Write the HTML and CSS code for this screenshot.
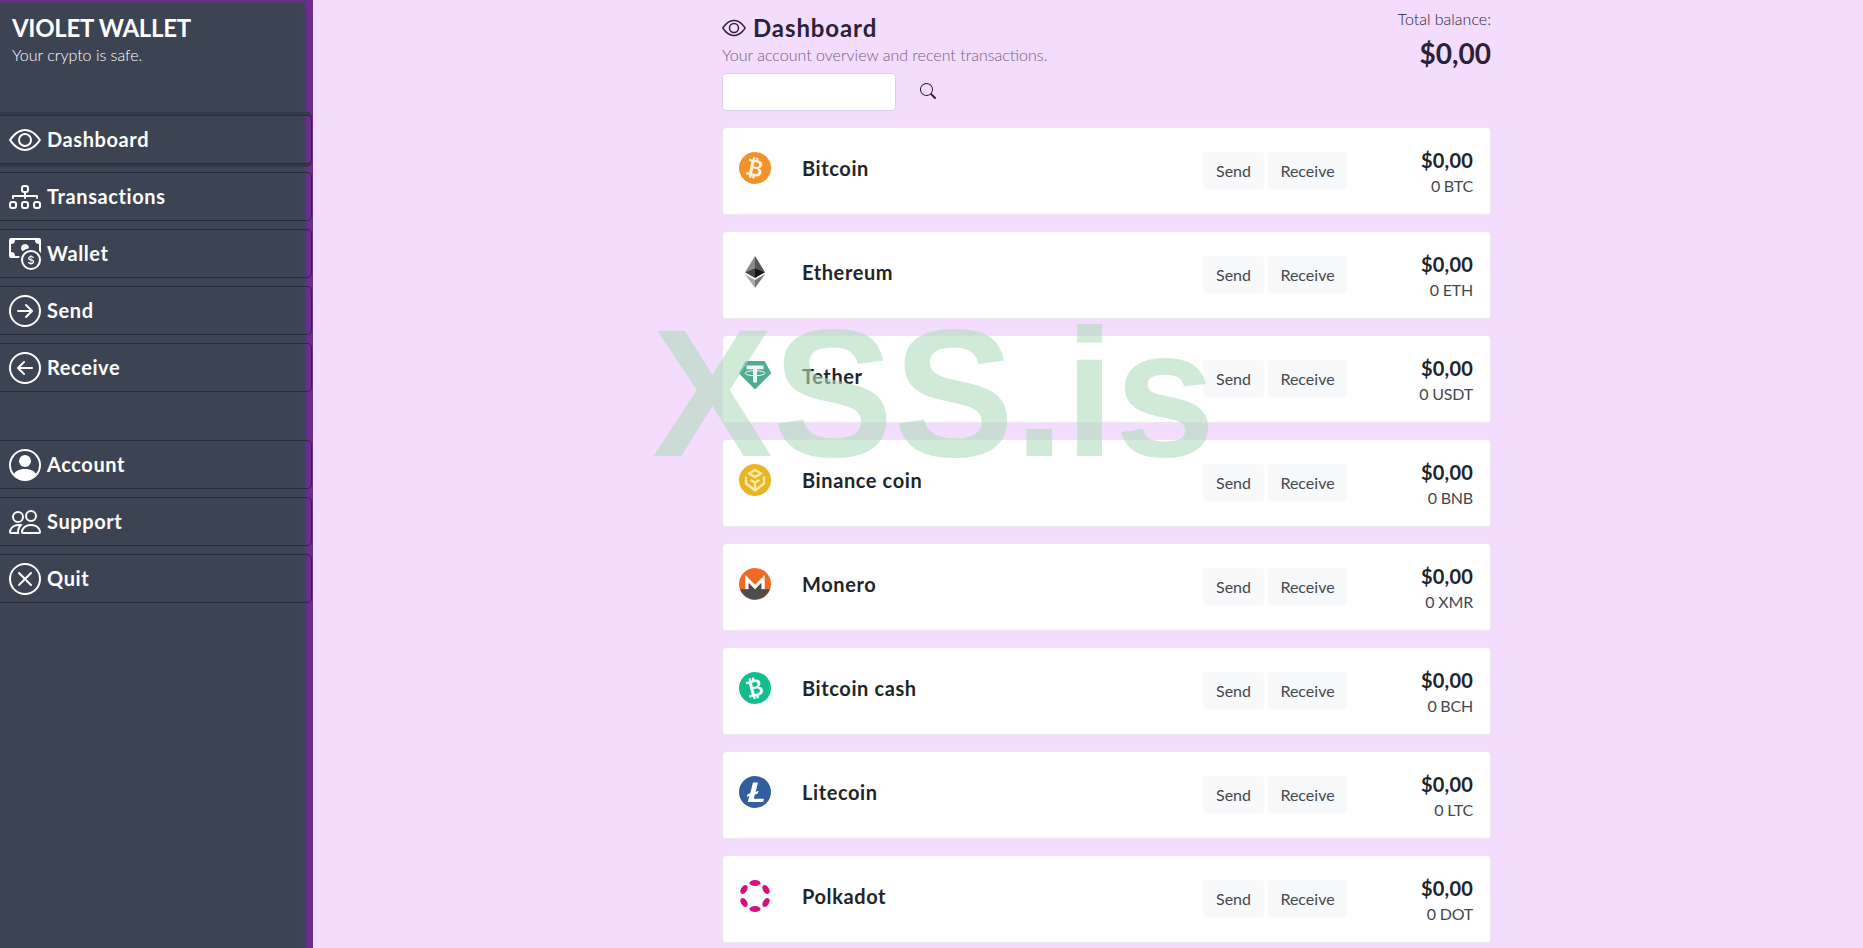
FILE: index.html
```html
<!DOCTYPE html>
<html lang="en">
<head>
    <meta charset="UTF-8">
    <meta name="viewport" content="width=device-width, initial-scale=1.0">
    <title>Violet Wallet - Dashboard</title>
    <link rel="stylesheet" href="styles.css">
</head>
<body>
    <svg class="icon-defs" xmlns="http://www.w3.org/2000/svg">
        <symbol id="i-eye" viewBox="0 0 16 16"><path d="M16 8s-3-5.5-8-5.5S0 8 0 8s3 5.5 8 5.5S16 8 16 8M1.173 8a13 13 0 0 1 1.66-2.043C4.12 4.668 5.88 3.5 8 3.5s3.879 1.168 5.168 2.457A13 13 0 0 1 14.828 8q-.086.13-.195.288c-.335.48-.83 1.12-1.465 1.755C11.879 11.332 10.119 12.5 8 12.5s-3.879-1.168-5.168-2.457A13 13 0 0 1 1.172 8z"/><path d="M8 5.5a2.5 2.5 0 1 0 0 5 2.5 2.5 0 0 0 0-5M4.5 8a3.5 3.5 0 1 1 7 0 3.5 3.5 0 0 1-7 0"/></symbol>
        <symbol id="i-diagram" viewBox="0 0 16 16"><path fill-rule="evenodd" d="M6 3.5A1.5 1.5 0 0 1 7.5 2h1A1.5 1.5 0 0 1 10 3.5v1A1.5 1.5 0 0 1 8.5 6v1H14a.5.5 0 0 1 .5.5v1a.5.5 0 0 1-1 0V8h-5v.5a.5.5 0 0 1-1 0V8h-5v.5a.5.5 0 0 1-1 0v-1A.5.5 0 0 1 2 7h5.5V6A1.5 1.5 0 0 1 6 4.5zM8.5 5a.5.5 0 0 0 .5-.5v-1a.5.5 0 0 0-.5-.5h-1a.5.5 0 0 0-.5.5v1a.5.5 0 0 0 .5.5zM0 11.5A1.5 1.5 0 0 1 1.5 10h1A1.5 1.5 0 0 1 4 11.5v1A1.5 1.5 0 0 1 2.5 14h-1A1.5 1.5 0 0 1 0 12.5zm1.5-.5a.5.5 0 0 0-.5.5v1a.5.5 0 0 0 .5.5h1a.5.5 0 0 0 .5-.5v-1a.5.5 0 0 0-.5-.5zm4.5.5A1.5 1.5 0 0 1 7.5 10h1a1.5 1.5 0 0 1 1.5 1.5v1A1.5 1.5 0 0 1 8.5 14h-1A1.5 1.5 0 0 1 6 12.5zm1.5-.5a.5.5 0 0 0-.5.5v1a.5.5 0 0 0 .5.5h1a.5.5 0 0 0 .5-.5v-1a.5.5 0 0 0-.5-.5zm4.5.5a1.5 1.5 0 0 1 1.5-1.5h1a1.5 1.5 0 0 1 1.5 1.5v1a1.5 1.5 0 0 1-1.5 1.5h-1a1.5 1.5 0 0 1-1.5-1.5zm1.5-.5a.5.5 0 0 0-.5.5v1a.5.5 0 0 0 .5.5h1a.5.5 0 0 0 .5-.5v-1a.5.5 0 0 0-.5-.5z"/></symbol>
        <symbol id="i-cash" viewBox="0 0 16 16"><path fill-rule="evenodd" d="M11 15a4 4 0 1 0 0-8 4 4 0 0 0 0 8m5-4a5 5 0 1 1-10 0 5 5 0 0 1 10 0"/><path d="M9.438 11.944c.047.596.518 1.06 1.363 1.116v.44h.375v-.443c.875-.061 1.386-.529 1.386-1.207 0-.618-.39-.936-1.09-1.1l-.296-.07v-1.2c.376.043.614.248.671.532h.658c-.047-.575-.54-1.024-1.329-1.073V8.5h-.375v.45c-.747.073-1.255.522-1.255 1.158 0 .562.378.92 1.007 1.066l.248.061v1.272c-.384-.058-.639-.27-.696-.563h-.668zm1.36-1.354c-.369-.085-.569-.26-.569-.522 0-.294.216-.514.572-.578v1.1zm.432.746c.449.104.655.272.655.569 0 .339-.257.571-.709.635v-1.195z"/><path d="M1 0a1 1 0 0 0-1 1v8a1 1 0 0 0 1 1h4.083q.088-.517.258-1H3a2 2 0 0 0-2-2V3a2 2 0 0 0 2-2h10a2 2 0 0 0 2 2v3.528c.38.34.717.728 1 1.154V1a1 1 0 0 0-1-1z"/><path d="M9.998 5.083 10 5a2 2 0 1 0-3.132 1.65 6 6 0 0 1 3.13-1.567"/></symbol>
        <symbol id="i-right" viewBox="0 0 16 16"><path fill-rule="evenodd" d="M1 8a7 7 0 1 0 14 0A7 7 0 0 0 1 8m15 0A8 8 0 1 1 0 8a8 8 0 0 1 16 0M4.5 7.5a.5.5 0 0 0 0 1h5.793l-2.147 2.146a.5.5 0 0 0 .708.708l3-3a.5.5 0 0 0 0-.708l-3-3a.5.5 0 1 0-.708.708L10.293 7.5z"/></symbol>
        <symbol id="i-left" viewBox="0 0 16 16"><path fill-rule="evenodd" d="M1 8a7 7 0 1 0 14 0A7 7 0 0 0 1 8m15 0A8 8 0 1 1 0 8a8 8 0 0 1 16 0m-4.5-.5a.5.5 0 0 1 0 1H5.707l2.147 2.146a.5.5 0 0 1-.708.708l-3-3a.5.5 0 0 1 0-.708l3-3a.5.5 0 1 1 .708.708L5.707 7.5z"/></symbol>
        <symbol id="i-person" viewBox="0 0 16 16"><path d="M11 6a3 3 0 1 1-6 0 3 3 0 0 1 6 0"/><path fill-rule="evenodd" d="M0 8a8 8 0 1 1 16 0A8 8 0 0 1 0 8m8-7a7 7 0 0 0-5.468 11.37C3.242 11.226 4.805 10 8 10s4.757 1.225 5.468 2.37A7 7 0 0 0 8 1"/></symbol>
        <symbol id="i-people" viewBox="0 0 16 16"><path d="M15 14s1 0 1-1-1-4-5-4-5 3-5 4 1 1 1 1zm-7.978-1L7 12.996c.001-.264.167-1.03.76-1.72C8.312 10.629 9.282 10 11 10c1.717 0 2.687.63 3.24 1.276.593.69.758 1.457.76 1.72l-.008.002-.014.002zM11 7a2 2 0 1 0 0-4 2 2 0 0 0 0 4m3-2a3 3 0 1 1-6 0 3 3 0 0 1 6 0M6.936 9.28a6 6 0 0 0-1.23-.247A7 7 0 0 0 5 9c-4 0-5 3-5 4q0 1 1 1h4.216A2.24 2.24 0 0 1 5 13c0-1.01.377-2.042 1.09-2.904.243-.294.526-.569.846-.816M4.92 10A5.5 5.5 0 0 0 4 13H1c0-.26.164-1.03.76-1.724.545-.636 1.492-1.256 3.16-1.275ZM1.5 5.5a3 3 0 1 1 6 0 3 3 0 0 1-6 0m3-2a2 2 0 1 0 0 4 2 2 0 0 0 0-4"/></symbol>
        <symbol id="i-x" viewBox="0 0 16 16"><path d="M8 15A7 7 0 1 1 8 1a7 7 0 0 1 0 14m0 1A8 8 0 1 0 8 0a8 8 0 0 0 0 16"/><path d="M4.646 4.646a.5.5 0 0 1 .708 0L8 7.293l2.646-2.647a.5.5 0 0 1 .708.708L8.707 8l2.647 2.646a.5.5 0 0 1-.708.708L8 8.707l-2.646 2.647a.5.5 0 0 1-.708-.708L7.293 8 4.646 5.354a.5.5 0 0 1 0-.708"/></symbol>
        <symbol id="i-search" viewBox="0 0 16 16"><path d="M11.742 10.344a6.5 6.5 0 1 0-1.397 1.398h-.001q.044.06.098.115l3.85 3.85a1 1 0 0 0 1.415-1.414l-3.85-3.85a1 1 0 0 0-.115-.1zM12 6.5a5.5 5.5 0 1 1-11 0 5.5 5.5 0 0 1 11 0"/></symbol>
        <symbol id="i-btc-mark" viewBox="0 0 16 16"><path d="M5.5 13v1.25c0 .138.112.25.25.25h1a.25.25 0 0 0 .25-.25V13h.5v1.25c0 .138.112.25.25.25h1a.25.25 0 0 0 .25-.25V13h.084c1.992 0 3.416-1.033 3.416-2.82 0-1.502-1.007-2.323-2.186-2.44v-.088c.97-.242 1.683-.974 1.683-2.19C11.997 3.93 10.847 3 9.092 3H9V1.75a.25.25 0 0 0-.25-.25h-1a.25.25 0 0 0-.25.25V3h-.573V1.75a.25.25 0 0 0-.25-.25H5.75a.25.25 0 0 0-.25.25V3l-1.998.011a.25.25 0 0 0-.25.25v.989c0 .137.11.25.248.25l.755-.005a.75.75 0 0 1 .745.75v5.505a.75.75 0 0 1-.75.75l-.748.011a.25.25 0 0 0-.25.25v1c0 .138.112.25.25.25zm1.427-8.513h1.719c.906 0 1.438.498 1.438 1.312 0 .871-.575 1.362-1.877 1.362h-1.28zm0 4.051h1.84c1.137 0 1.756.58 1.756 1.524 0 .953-.626 1.45-2.158 1.45H6.927z"/></symbol>
    </svg>

    <aside class="sidebar">
        <div class="brand">
            <h1>VIOLET WALLET</h1>
            <p>Your crypto is safe.</p>
        </div>
        <nav class="nav-group">
            <a class="nav-item active" href="#"><svg class="nav-icon"><use href="#i-eye"/></svg><span>Dashboard</span></a>
            <a class="nav-item" href="#"><svg class="nav-icon"><use href="#i-diagram"/></svg><span>Transactions</span></a>
            <a class="nav-item" href="#"><svg class="nav-icon"><use href="#i-cash"/></svg><span>Wallet</span></a>
            <a class="nav-item" href="#"><svg class="nav-icon"><use href="#i-right"/></svg><span>Send</span></a>
            <a class="nav-item" href="#"><svg class="nav-icon"><use href="#i-left"/></svg><span>Receive</span></a>
        </nav>
        <nav class="nav-group nav-bottom">
            <a class="nav-item" href="#"><svg class="nav-icon"><use href="#i-person"/></svg><span>Account</span></a>
            <a class="nav-item" href="#"><svg class="nav-icon"><use href="#i-people"/></svg><span>Support</span></a>
            <a class="nav-item" href="#"><svg class="nav-icon"><use href="#i-x"/></svg><span>Quit</span></a>
        </nav>
    </aside>

    <main class="main">
        <header class="page-head">
            <div>
                <h2 class="page-title"><svg class="title-icon"><use href="#i-eye"/></svg>Dashboard</h2>
                <p class="page-sub">Your account overview and recent transactions.</p>
                <div class="search-row">
                    <input class="search-input" type="text">
                    <button class="search-btn" type="button"><svg class="search-icon"><use href="#i-search"/></svg></button>
                </div>
            </div>
            <div class="total">
                <p class="total-label">Total balance:</p>
                <p class="total-value">$0,00</p>
            </div>
        </header>

        <section class="coin-list">
            <article class="coin-card">
                <div class="coin">
                    <svg class="coin-logo" viewBox="0 0 32 32"><circle cx="16" cy="16" r="16" fill="#f4922a"/><svg x="3" y="3" width="26" height="26" viewBox="0 0 16 16" fill="#fdf0dc"><use href="#i-btc-mark" transform="rotate(12 8 8)"/></svg></svg>
                    <span class="coin-name">Bitcoin</span>
                </div>
                <div class="coin-actions"><button type="button">Send</button><button type="button">Receive</button></div>
                <div class="coin-amount"><strong>$0,00</strong><span>0 BTC</span></div>
            </article>
            <article class="coin-card">
                <div class="coin">
                    <svg class="coin-logo" viewBox="0 0 32 32"><polygon points="16,0 6,16.2 16,12" fill="#8a8a8a"/><polygon points="16,0 26,16.2 16,12" fill="#555"/><polygon points="6,16.2 16,12 16,22" fill="#454545"/><polygon points="26,16.2 16,12 16,22" fill="#141414"/><polygon points="6,18.2 16,32 16,24" fill="#aaa"/><polygon points="26,18.2 16,32 16,24" fill="#777"/></svg>
                    <span class="coin-name">Ethereum</span>
                </div>
                <div class="coin-actions"><button type="button">Send</button><button type="button">Receive</button></div>
                <div class="coin-amount"><strong>$0,00</strong><span>0 ETH</span></div>
            </article>
            <article class="coin-card">
                <div class="coin">
                    <svg class="coin-logo" viewBox="0 0 32 32"><polygon points="7,2 25,2 31,13 16,28 1,13" fill="#4fac93" stroke="#4fac93" stroke-width="2" stroke-linejoin="round"/><path d="M7.5 5.5h17v3.8h-6.5v13.2h-4V9.3H7.5z" fill="#eef8f5"/><ellipse cx="16" cy="13.2" rx="10" ry="2.5" fill="none" stroke="#eef8f5"/></svg>
                    <span class="coin-name">Tether</span>
                </div>
                <div class="coin-actions"><button type="button">Send</button><button type="button">Receive</button></div>
                <div class="coin-amount"><strong>$0,00</strong><span>0 USDT</span></div>
            </article>
            <article class="coin-card">
                <div class="coin">
                    <svg class="coin-logo" viewBox="0 0 32 32"><circle cx="16" cy="16" r="16" fill="#e9b522"/><g fill="none" stroke="#fbeab0" stroke-width="2.4" stroke-linejoin="round"><polygon points="16,6 22,9.5 16,13 10,9.5"/><polyline points="7,12.5 7,19.5 16,26.5 25,19.5 25,12.5"/><polyline points="11.5,16 16,18.5 20.5,16"/><line x1="16" y1="18.5" x2="16" y2="25"/></g></svg>
                    <span class="coin-name">Binance coin</span>
                </div>
                <div class="coin-actions"><button type="button">Send</button><button type="button">Receive</button></div>
                <div class="coin-amount"><strong>$0,00</strong><span>0 BNB</span></div>
            </article>
            <article class="coin-card">
                <div class="coin">
                    <svg class="coin-logo" viewBox="0 0 32 32"><circle cx="16" cy="16" r="16" fill="#ee6a25"/><path d="M6.3 7l9.7 9.7L25.7 7v14.3h-3.4v-6.2L16 21.4l-6.3-6.3v6.2H6.3z" fill="#fff"/><path d="M9.7 15.1L16 21.4l6.3-6.3v6.2h8.6A16 16 0 0 1 1.1 21.3h8.6z" fill="#4d4d4d"/></svg>
                    <span class="coin-name">Monero</span>
                </div>
                <div class="coin-actions"><button type="button">Send</button><button type="button">Receive</button></div>
                <div class="coin-amount"><strong>$0,00</strong><span>0 XMR</span></div>
            </article>
            <article class="coin-card">
                <div class="coin">
                    <svg class="coin-logo" viewBox="0 0 32 32"><circle cx="16" cy="16" r="16" fill="#14bd90"/><svg x="3" y="3" width="26" height="26" viewBox="0 0 16 16" fill="#eefaf6"><use href="#i-btc-mark" transform="rotate(-14 8 8)"/></svg></svg>
                    <span class="coin-name">Bitcoin cash</span>
                </div>
                <div class="coin-actions"><button type="button">Send</button><button type="button">Receive</button></div>
                <div class="coin-amount"><strong>$0,00</strong><span>0 BCH</span></div>
            </article>
            <article class="coin-card">
                <div class="coin">
                    <svg class="coin-logo" viewBox="0 0 32 32"><circle cx="16" cy="16" r="16" fill="#345d9d"/><path d="M14 6.5h5l-2.4 9.4 3-1.1-.8 2.8-3 1.1-1.1 4h10.3l-.9 3.3H8.7l1.7-6.1-2.6 1 .7-2.7 2.7-1z" fill="#fff"/></svg>
                    <span class="coin-name">Litecoin</span>
                </div>
                <div class="coin-actions"><button type="button">Send</button><button type="button">Receive</button></div>
                <div class="coin-amount"><strong>$0,00</strong><span>0 LTC</span></div>
            </article>
            <article class="coin-card">
                <div class="coin">
                    <svg class="coin-logo" viewBox="0 0 32 32" fill="#d6107e"><ellipse cx="16" cy="3" rx="5.6" ry="3"/><ellipse cx="16" cy="29" rx="5.6" ry="3"/><ellipse cx="5" cy="9.5" rx="4.8" ry="3" transform="rotate(-60 5 9.5)"/><ellipse cx="27" cy="9.5" rx="4.8" ry="3" transform="rotate(60 27 9.5)"/><ellipse cx="5" cy="22.5" rx="4.8" ry="3" transform="rotate(60 5 22.5)"/><ellipse cx="27" cy="22.5" rx="4.8" ry="3" transform="rotate(-60 27 22.5)"/></svg>
                    <span class="coin-name">Polkadot</span>
                </div>
                <div class="coin-actions"><button type="button">Send</button><button type="button">Receive</button></div>
                <div class="coin-amount"><strong>$0,00</strong><span>0 DOT</span></div>
            </article>
        </section>
    </main>

    <div class="watermark">XSS.is</div>
</body>
</html>
```
FILE: styles.css
```css
* {
    margin: 0;
    padding: 0;
    box-sizing: border-box;
    font-family: 'Lato', 'Open Sans', sans-serif;
}

:root {
    --side: #3c4353;
    --side-line: #272c38;
    --violet: #6c2d91;
    --lilac: #f3dcfd;
    --ink: #2a2236;
    --text: #212529;
}

html, body {
    height: 100%;
}

body {
    display: flex;
    position: relative;
    overflow: hidden;
    background: var(--lilac);
    color: var(--text);
}

.icon-defs {
    display: none;
}

.nav-icon, .title-icon, .search-icon {
    fill: currentColor;
}

/* sidebar */
.sidebar {
    width: 313px;
    flex-shrink: 0;
    background:
        linear-gradient(to left, var(--violet) 5px, transparent 10px),
        linear-gradient(to bottom, var(--violet), transparent 4px),
        var(--side);
    color: #fff;
}

.brand {
    height: 111px;
    padding: 12px 12px 0;
}

.brand h1 {
    font-size: 24px;
    line-height: 32px;
    font-weight: 700;
    letter-spacing: -0.3px;
}

.brand p {
    font-size: 16px;
    line-height: 22px;
    font-weight: 300;
}

.nav-group {
    display: flex;
    flex-direction: column;
    gap: 8px;
    padding-top: 4px;
}

.nav-bottom {
    margin-top: 44px;
}

.nav-item {
    display: flex;
    align-items: center;
    gap: 6px;
    height: 49px;
    width: 312px;
    padding-left: 9px;
    border: 1px solid var(--side-line);
    border-left: none;
    border-radius: 0 5px 5px 0;
    color: #fff;
    text-decoration: none;
    font-size: 20px;
    font-weight: 700;
    letter-spacing: 0.6px;
}

.nav-item span {
    padding-bottom: 2px;
}

.nav-item.active {
    box-shadow: 0 -3px 0 #323847, 0 3px 0 #323847;
}

.nav-icon {
    width: 32px;
    height: 32px;
    flex-shrink: 0;
}

/* main column */
.main {
    width: 769px;
    margin-left: 409px;
}

.page-head {
    display: flex;
    justify-content: space-between;
    height: 127px;
}

.page-title {
    display: flex;
    align-items: center;
    gap: 7px;
    margin-top: 12px;
    font-size: 24px;
    line-height: 32px;
    font-weight: 700;
    letter-spacing: 0.9px;
    color: var(--ink);
}

.title-icon {
    width: 24px;
    height: 24px;
}

.page-sub {
    font-size: 16px;
    line-height: 22px;
    font-weight: 300;
    color: #6f6379;
}

.search-row {
    display: flex;
    align-items: center;
    margin-top: 7px;
}

.search-input {
    width: 174px;
    height: 38px;
    background: #fff;
    border: 1px solid #ddd0e6;
    border-radius: 4px;
}

.search-btn {
    display: flex;
    margin: 0 0 2px 24px;
    background: none;
    border: none;
    color: var(--ink);
}

.search-icon {
    width: 16px;
    height: 16px;
}

.total {
    text-align: right;
    padding-top: 7px;
}

.total-label {
    font-size: 16px;
    line-height: 24px;
    font-weight: 300;
    color: var(--ink);
}

.total-value {
    margin-top: 4px;
    font-size: 28px;
    line-height: 36px;
    font-weight: 700;
    color: var(--ink);
}

/* coin cards */
.coin-list {
    display: flex;
    flex-direction: column;
    gap: 16px;
}

.coin-card {
    display: flex;
    align-items: center;
    height: 88px;
    padding: 0 17px 0 16px;
    background: #fff;
    border: 1px solid rgba(60, 30, 80, 0.1);
    border-radius: 4px;
}

.coin {
    display: flex;
    align-items: center;
    gap: 31px;
    margin-bottom: 6px;
}

.coin-logo {
    width: 32px;
    height: 32px;
}

.coin-name {
    font-size: 20px;
    font-weight: 700;
    letter-spacing: 0.6px;
}

.coin-actions {
    display: flex;
    gap: 4px;
    margin-left: auto;
}

.coin-actions button {
    width: 61px;
    height: 38px;
    padding-bottom: 2px;
    background: #f8f9fa;
    border: none;
    border-radius: 4px;
    font-size: 16px;
    font-weight: 400;
    color: #44484d;
}

.coin-actions button + button {
    width: 79px;
}

.coin-amount {
    display: flex;
    flex-direction: column;
    width: 126px;
    padding-top: 4px;
    text-align: right;
}

.coin-amount strong {
    font-size: 20px;
    line-height: 26px;
    font-weight: 700;
    letter-spacing: 0.2px;
}

.coin-amount span {
    font-size: 16px;
    line-height: 26px;
    font-weight: 400;
    letter-spacing: -0.2px;
    color: #44484d;
}

/* overlay stamp on top of the page */
.watermark {
    position: absolute;
    left: 652px;
    top: 303px;
    font-family: 'Liberation Sans', sans-serif;
    font-size: 181px;
    line-height: 181px;
    font-weight: 700;
    color: rgba(177, 220, 190, 0.6);
    pointer-events: none;
}
```
